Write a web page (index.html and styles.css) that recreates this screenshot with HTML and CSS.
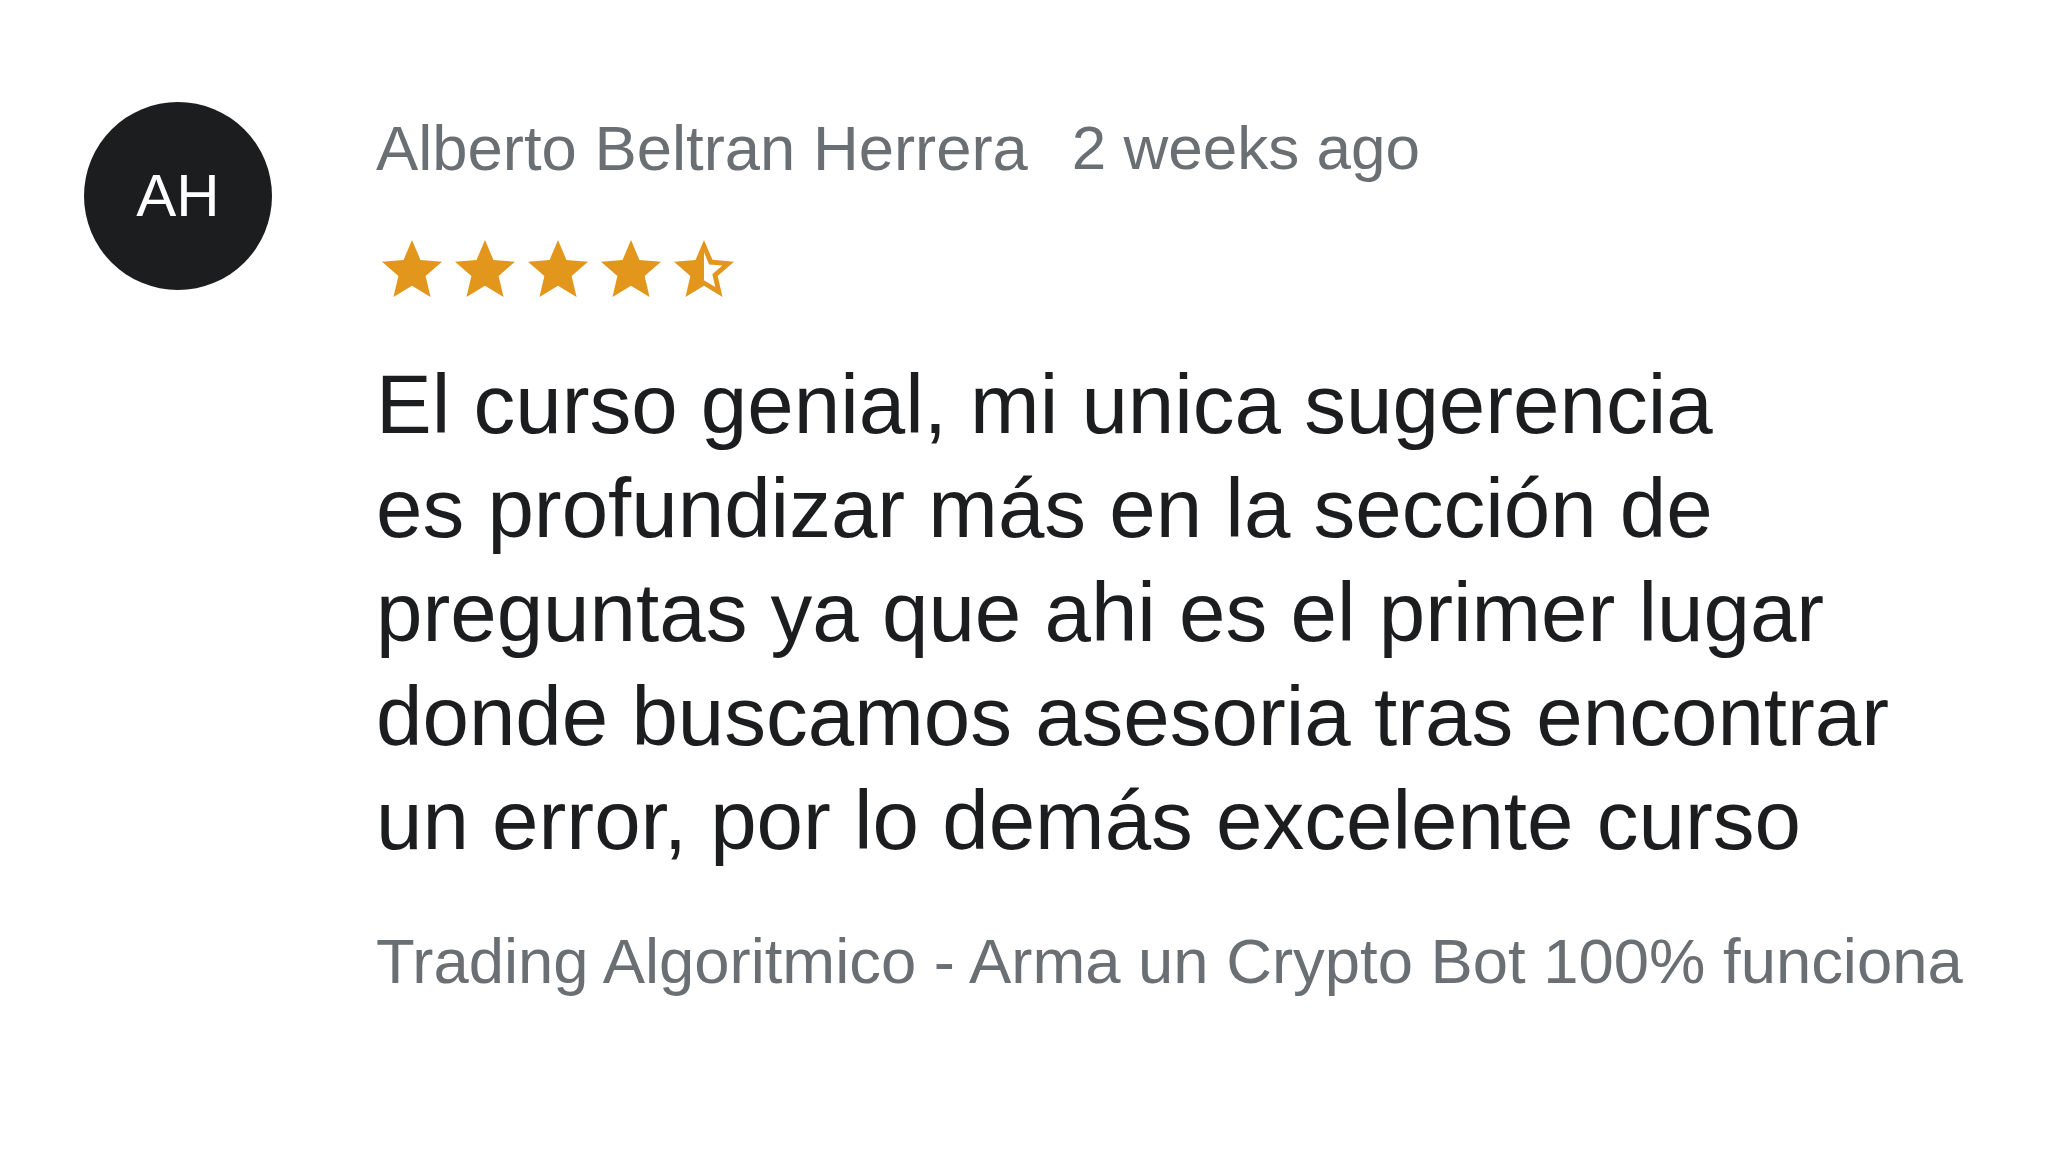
FILE: index.html
```html
<!DOCTYPE html>
<html lang="es">
<head>
<meta charset="utf-8">
<title>Review</title>
<link rel="stylesheet" href="styles.css">
</head>
<body>
<div class="review">
  <div class="avatar">AH</div>
  <div class="content">
    <div class="meta">
      <span class="name">Alberto Beltran Herrera</span>
      <span class="time">2 weeks ago</span>
    </div>
    <div class="stars" aria-label="Rating: 4.5 out of 5">
      <svg class="star" viewBox="0 0 24 24"><path d="M12 17.27L18.18 21l-1.64-7.03L22 9.24l-7.19-.61L12 2 9.19 8.63 2 9.24l5.46 4.73L5.82 21z"/></svg>
      <svg class="star" viewBox="0 0 24 24"><path d="M12 17.27L18.18 21l-1.64-7.03L22 9.24l-7.19-.61L12 2 9.19 8.63 2 9.24l5.46 4.73L5.82 21z"/></svg>
      <svg class="star" viewBox="0 0 24 24"><path d="M12 17.27L18.18 21l-1.64-7.03L22 9.24l-7.19-.61L12 2 9.19 8.63 2 9.24l5.46 4.73L5.82 21z"/></svg>
      <svg class="star" viewBox="0 0 24 24"><path d="M12 17.27L18.18 21l-1.64-7.03L22 9.24l-7.19-.61L12 2 9.19 8.63 2 9.24l5.46 4.73L5.82 21z"/></svg>
      <svg class="star" viewBox="0 0 24 24"><path d="M22 9.24l-7.19-.62L12 2 9.19 8.63 2 9.24l5.46 4.73L5.82 21 12 17.27 18.18 21l-1.63-7.03L22 9.24zM12 15.4V6.1l1.71 4.04 4.38.38-3.32 2.88 1 4.28L12 15.4z"/></svg>
    </div>
    <p class="text">El curso genial, mi unica sugerencia<br>es profundizar más en la sección de preguntas ya que ahi es el primer lugar donde buscamos asesoria tras encontrar un error, por lo demás excelente curso</p>
    <div class="course">Trading Algoritmico - Arma un Crypto Bot 100% funciona</div>
  </div>
</div>
</body>
</html>
```

FILE: styles.css
```css
html, body {
  margin: 0;
  padding: 0;
  background: #ffffff;
}

body {
  font-family: "Liberation Sans", Arial, sans-serif;
  color: #1c1d1f;
}

.review {
  display: flex;
  align-items: flex-start;
  gap: 104px;
  padding: 102px 0 0 84px;
}

.avatar {
  flex: 0 0 188px;
  width: 188px;
  height: 188px;
  border-radius: 50%;
  background: #1c1d1f;
  color: #ffffff;
  display: flex;
  align-items: center;
  justify-content: center;
  font-size: 60px;
  line-height: 1;
}

.content {
  display: flex;
  flex-direction: column;
}

.meta {
  display: flex;
  gap: 44px;
  font-size: 63.4px;
  line-height: 92px;
  color: #6a6f73;
  white-space: nowrap;
}

.time {
  font-size: 62px;
}

.stars {
  display: flex;
  gap: 1px;
  margin-top: 40px;
  height: 72px;
}

.star {
  width: 72px;
  height: 72px;
  fill: #e2961c;
}

.text {
  margin: 46px 0 0 0;
  width: 1560px;
  font-size: 83.5px;
  line-height: 104px;
  color: #1c1d1f;
}

.course {
  margin-top: 43px;
  font-size: 63.4px;
  line-height: 92px;
  color: #6a6f73;
  white-space: nowrap;
}
```
